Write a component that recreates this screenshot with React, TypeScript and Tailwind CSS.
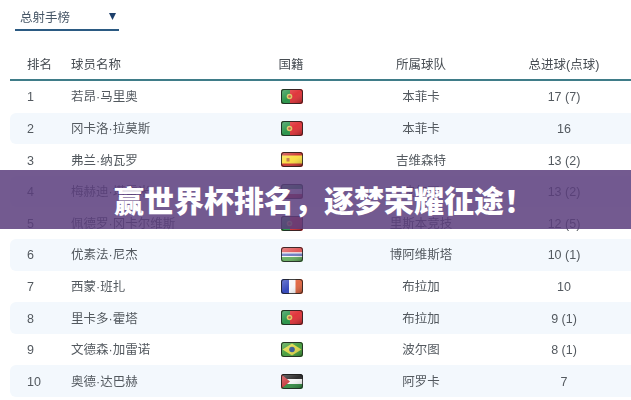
const Gloss = ({ id }: { id: string }) => (
  <>
    <defs>
      <linearGradient id={id} x1="0" y1="0" x2="1" y2="1">
        <stop offset="0" stopColor="#fff" stopOpacity="0.3" />
        <stop offset="0.5" stopColor="#fff" stopOpacity="0.06" />
        <stop offset="1" stopColor="#000" stopOpacity="0.28" />
      </linearGradient>
    </defs>
    <rect x="1" y="1" width="20" height="13" fill={`url(#${id})`} />
  </>
);

const art: Record<string, React.ReactNode> = {
  pt: (
    <>
      <rect width="22" height="15" fill="#de2a30" />
      <rect width="9" height="15" fill="#1f8f40" />
      <circle cx="8.5" cy="7.5" r="2.8" fill="#d9c65a" />
      <circle cx="8.5" cy="7.5" r="1.3" fill="#b9503f" />
    </>
  ),
  es: (
    <>
      <rect width="22" height="15" fill="#c9302c" />
      <rect y="3.5" width="22" height="8" fill="#f9dc3c" />
      <rect x="5.5" y="6" width="3" height="3.5" fill="#c2703a" />
    </>
  ),
  ir: (
    <>
      <rect width="22" height="5" fill="#2a9a4b" />
      <rect y="5" width="22" height="5" fill="#f2f2f2" />
      <rect y="10" width="22" height="5" fill="#d02a30" />
    </>
  ),
  gm: (
    <>
      <rect width="22" height="5.5" fill="#de4f50" />
      <rect y="5.5" width="22" height="1" fill="#f7f7f7" />
      <rect y="6.5" width="22" height="2.5" fill="#6a78c0" />
      <rect y="9" width="22" height="1" fill="#f7f7f7" />
      <rect y="10" width="22" height="5" fill="#62ad5c" />
    </>
  ),
  fr: (
    <>
      <rect width="22" height="15" fill="#f6f6f8" />
      <rect width="8" height="15" fill="#2a3fb8" />
      <rect x="14.5" width="7.5" height="15" fill="#e0603a" />
    </>
  ),
  br: (
    <>
      <rect width="22" height="15" fill="#3f9a35" />
      <polygon points="11,1.5 20.5,7.5 11,13.5 1.5,7.5" fill="#dcd544" />
      <circle cx="11" cy="7.5" r="2.8" fill="#2f5590" />
    </>
  ),
  ps: (
    <>
      <rect width="22" height="5" fill="#222" />
      <rect y="5" width="22" height="5" fill="#f4f4f4" />
      <rect y="10" width="22" height="5" fill="#2f8a3e" />
      <polygon points="0,0 9,7.5 0,15" fill="#c8353a" />
    </>
  ),
};

const Flag = ({ code, id }: { code: string; id: string }) => (
  <svg width="22" height="15" viewBox="0 0 22 15" className="block">
    <defs>
      <clipPath id={`c${id}`}>
        <rect width="22" height="15" rx="2.5" />
      </clipPath>
    </defs>
    <g clipPath={`url(#c${id})`}>
      {art[code]}
      <Gloss id={`g${id}`} />
    </g>
    <rect x="0.5" y="0.5" width="21" height="14" rx="2.5" fill="none" stroke="#222" strokeOpacity="0.85" />
  </svg>
);

const rows = [
  ["1", "若昂·马里奥", "pt", "本菲卡", "17 (7)"],
  ["2", "冈卡洛·拉莫斯", "pt", "本菲卡", "16"],
  ["3", "弗兰·纳瓦罗", "es", "吉维森特", "13 (2)"],
  ["4", "梅赫迪·塔雷米", "ir", "波尔图", "13 (2)"],
  ["5", "佩德罗·冈卡尔维斯", "pt", "里斯本竞技", "12 (5)"],
  ["6", "优素法·尼杰", "gm", "博阿维斯塔", "10 (1)"],
  ["7", "西蒙·班扎", "fr", "布拉加", "10"],
  ["8", "里卡多·霍塔", "pt", "布拉加", "9 (1)"],
  ["9", "文德森·加雷诺", "br", "波尔图", "8 (1)"],
  ["10", "奥德·达巴赫", "ps", "阿罗卡", "7"],
];

const grid = "grid grid-cols-[17px_44px_190px_60px_200px_86px] items-center";

export default function App() {
  return (
    <div className="relative w-[631px] h-[400px] overflow-hidden bg-white font-['Liberation_Sans','Noto_Sans_CJK_SC',sans-serif] text-[12.5px] text-[#53595f]">
      <div className="blur-[0.4px]">
        <div className="ml-[15px] w-[104px] h-[31px] border-b-2 border-[#2b5a82] flex items-center justify-between pl-[5px] pr-[3px] pt-[7px] text-[#465666]">
          <span>总射手榜</span>
          <svg width="7" height="7" viewBox="0 0 7 7" className="block mb-[3px]">
            <polygon points="0,0 7,0 3.5,7" fill="#1d3f6b" />
          </svg>
        </div>
        <div className={`${grid} mt-[18px] ml-[10px] h-[30px] pt-[2px] text-[#474d53]`}>
          <span />
          <span>排名</span>
          <span>球员名称</span>
          <span className="text-center">国籍</span>
          <span className="text-center">所属球队</span>
          <span className="text-center">总进球(点球)</span>
        </div>
        <div className="ml-[10px] h-[2px] bg-[#3f7c88]" />
        <div className="ml-[10px]">
          {rows.map((r, i) => (
            <div key={r[0]} className={`${grid} h-[31.6px] pt-[2px] rounded-l-md ${i % 2 === 1 ? "bg-[#f3f8fd]" : "bg-white"}`}>
              <span />
              <span>{r[0]}</span>
              <span>{r[1]}</span>
              <span className="flex justify-center pl-[2px] mb-[2px]">
                <Flag code={r[2]} id={r[0]} />
              </span>
              <span className="text-center">{r[3]}</span>
              <span className="text-center">{r[4]}</span>
            </div>
          ))}
        </div>
      </div>
      <div className="absolute left-0 right-0 top-[170px] h-[59px] bg-[#5a3d7c]/85 flex items-center pl-[114px] pb-[1px] text-[30px] leading-none font-black text-white whitespace-nowrap font-['Noto_Sans_CJK_SC',sans-serif]">
        {"赢世界杯排名\uFF0C逐梦荣耀征途\uFF01"}
      </div>
    </div>
  );
}
